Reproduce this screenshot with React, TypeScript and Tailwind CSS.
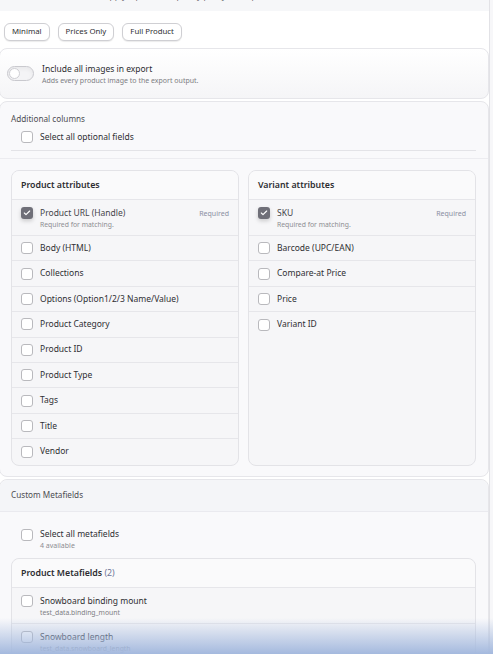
import { Check } from "lucide-react";

type Field = { label: string; required?: boolean };

const PRODUCT_FIELDS: Field[] = [
  { label: "Product URL (Handle)", required: true },
  { label: "Body (HTML)" },
  { label: "Collections" },
  { label: "Options (Option1/2/3 Name/Value)" },
  { label: "Product Category" },
  { label: "Product ID" },
  { label: "Product Type" },
  { label: "Tags" },
  { label: "Title" },
  { label: "Vendor" },
];

const VARIANT_FIELDS: Field[] = [
  { label: "SKU", required: true },
  { label: "Barcode (UPC/EAN)" },
  { label: "Compare-at Price" },
  { label: "Price" },
  { label: "Variant ID" },
];

const METAFIELDS = [
  { label: "Snowboard binding mount", key: "test_data.binding_mount" },
  { label: "Snowboard length", key: "test_data.snowboard_length" },
];

function Box({ checked }: { checked?: boolean }) {
  if (checked) {
    return (
      <span className="flex items-center justify-center w-[12px] h-[12px] rounded-[3px] bg-[#6f6f78] shadow-[0_2px_4px_rgba(0,0,0,0.18)] shrink-0">
        <Check size={8} strokeWidth={3.5} className="text-white" />
      </span>
    );
  }
  return <span className="block w-[12px] h-[12px] rounded-[3px] border border-[#b9b9bd] bg-white shrink-0" />;
}

function AttrCard({ title, fields }: { title: string; fields: Field[] }) {
  return (
    <div className="rounded-[8px] border border-[#e3e3e7] bg-[#f6f6f8] overflow-hidden">
      <div className="h-[29px] flex items-center pt-[2px] px-[9px] bg-[#fafafb] border-b border-[#e6e6ea]">
        <span className="text-[8.8px] font-semibold text-[#2c2c30]">{title}</span>
      </div>
      {fields.map((f, i) =>
        f.required ? (
          <div key={i} className="h-[36px] flex items-start pt-[7px] pl-[9px] pr-[9px] gap-[7px] border-b border-[#e6e6ea]">
            <Box checked />
            <div className="flex-1 flex flex-col -mt-[1px]">
              <span className="text-[8.5px] leading-[13px] text-[#45454a]">{f.label}</span>
              <span className="text-[6.8px] leading-[11px] text-[#8d8d92]">Required for matching.</span>
            </div>
            <span className="text-[7px] leading-[13px] text-[#8a8fa2]">Required</span>
          </div>
        ) : (
          <div
            key={i}
            className={`h-[25.4px] flex items-center pl-[9px] gap-[7px] ${i < fields.length - 1 ? "border-b border-[#e6e6ea]" : ""}`}
          >
            <Box />
            <span className="text-[8.5px] text-[#2f2f33]">{f.label}</span>
          </div>
        )
      )}
    </div>
  );
}

export default function App() {
  return (
    <div className="relative w-[493px] h-[654px] overflow-hidden bg-white flex items-start font-['Noto_Sans',sans-serif]">
      <div className="w-[489px] shrink-0">
        {/* cut-off text above */}
        <div className="h-[11px] overflow-hidden bg-[#f6f7f9]">
          <div className="-mt-[11px] pl-[104px] text-[8.5px] leading-[14px] text-[#6a6a70]">
            Apply a preset to quickly pick your export columns.
          </div>
        </div>

        {/* presets */}
        <div className="flex gap-[8px] pl-[4px] pt-[12px] pb-[7px]">
          {["Minimal", "Prices Only", "Full Product"].map((p) => (
            <button
              key={p}
              className="h-[18px] px-[7px] rounded-[6px] border border-[#cfcfd3] bg-white text-[7.8px] text-[#2f2f33] shadow-[0_1px_1px_rgba(0,0,0,0.08)]"
            >
              {p}
            </button>
          ))}
        </div>

        {/* images toggle */}
        <div className="h-[51px] -ml-[1px] rounded-[8px] border border-[#e6e6ea] bg-gradient-to-b from-white to-[#f5f5f7] flex items-center pl-[7px] gap-[8px]">
          <span className="relative w-[27px] h-[15px] rounded-full border border-[#c9c9ce] bg-[#f4f4f6] shadow-inner">
            <span className="absolute left-[1px] top-[1px] w-[11px] h-[11px] rounded-full bg-white border border-[#cfcfd4]" />
          </span>
          <div className="flex flex-col">
            <span className="text-[8.5px] leading-[13px] text-[#2c2c30]">Include all images in export</span>
            <span className="text-[7px] leading-[11px] text-[#7d7d82]">Adds every product image to the export output.</span>
          </div>
        </div>

        {/* additional columns */}
        <div className="mt-[2px] -ml-[1px] rounded-[8px] border border-[#e6e6ea] bg-[#f9f9fb]">
          <div className="pl-[11px] pr-[12px] pt-[10px] border-b border-[#ececf0]">
            <div className="text-[8.2px] leading-[14px] text-[#4d4d52]">Additional columns</div>
            <div className="flex items-center gap-[7px] pl-[10px] h-[22px]">
              <Box />
              <span className="text-[8.5px] text-[#2f2f33]">Select all optional fields</span>
            </div>
            <div className="mt-[2px] border-b border-[#e3e3e7] mb-[7px]" />
          </div>
          <div className="grid grid-cols-2 gap-[9px] pl-[11px] pr-[12px] pt-[11px] pb-[10px]">
            <AttrCard title="Product attributes" fields={PRODUCT_FIELDS} />
            <AttrCard title="Variant attributes" fields={VARIANT_FIELDS} />
          </div>
        </div>

        {/* custom metafields */}
        <div className="mt-[2px] -ml-[1px] rounded-t-[8px] border border-[#e6e6ea] bg-[#f9f9fb]">
          <div className="h-[32px] flex items-center pl-[11px] bg-[#f4f5f8] border-b border-[#eaeaef] rounded-t-[8px]">
            <span className="text-[8.2px] text-[#4d4d52]">Custom Metafields</span>
          </div>
          <div className="pl-[11px] pr-[12px] pt-[17px]">
            <div className="flex items-start gap-[7px] pl-[10px]">
              <Box />
              <div className="flex flex-col -mt-[1px]">
                <span className="text-[8.5px] leading-[12px] text-[#2f2f33]">Select all metafields</span>
                <span className="text-[7px] leading-[12px] text-[#8d8d92]">4 available</span>
              </div>
            </div>
            <div className="mt-[6px] rounded-t-[8px] border border-[#e3e3e7] bg-[#f6f6f8]">
              <div className="h-[29px] flex items-center pt-[2px] px-[9px] bg-[#fafafb] border-b border-[#e6e6ea] rounded-t-[8px]">
                <span className="text-[8.8px] font-semibold text-[#2c2c30]">
                  Product Metafields <span className="font-normal text-[#6f7698]">(2)</span>
                </span>
              </div>
              {METAFIELDS.map((m) => (
                <div key={m.key} className="h-[36px] flex items-start pt-[7px] pl-[9px] gap-[7px] border-b border-[#e6e6ea]">
                  <Box />
                  <div className="flex flex-col -mt-[1px]">
                    <span className="text-[8.5px] leading-[13px] text-[#2f2f33]">{m.label}</span>
                    <span className="text-[6.8px] leading-[11px] text-[#7d7d82]">{m.key}</span>
                  </div>
                </div>
              ))}
            </div>
          </div>
        </div>
      </div>

      {/* scroll edge */}
      <div className="self-stretch flex-1 border-l border-[#e2e2e6] bg-[#f7f7f9]" />

      {/* bottom fade */}
      <div className="pointer-events-none absolute left-0 right-0 bottom-0 h-[36px] bg-gradient-to-b from-[rgba(190,205,230,0)] to-[#a4b9de]" />
    </div>
  );
}
